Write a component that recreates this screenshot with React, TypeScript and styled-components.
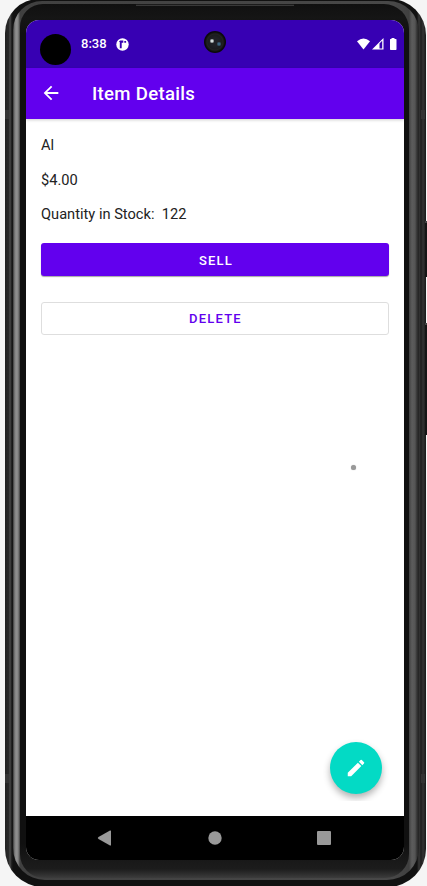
import React from "react";
import styled, { createGlobalStyle } from "styled-components";

const GlobalStyle = createGlobalStyle`
  * { box-sizing: border-box; }
  body { margin: 0; background: #f5f5f5; overflow: hidden; font-family: Roboto, sans-serif; }
  button { font-family: inherit; }
`;

const Stage = styled.main`
  position: relative;
  width: 427px;
  height: 886px;
  overflow: hidden;
  padding-left: 5px;
  background: #f5f5f5;
`;

const Shell = styled.div`
  width: 421px;
  height: 888px;
  margin-top: -1px;
  padding: 2px 7px 7px 8px;
  border-radius: 34px 36px 38px 38px;
  background: linear-gradient(90deg, #202020 0, #292929 4px, #505050 5px, #282828 6px, #111 8px, #111 412px, #383838 414px, #1c1c1c 416px, #333 418px, #181818 421px);
`;

const Rim = styled.div`
  height: 100%;
  padding: 3px 10px 2px 7px;
  border-radius: 29px 31px 32px 32px;
  background: linear-gradient(90deg, #333 0, #666 1px, #919191 3px, #858585 5px, #404040 7px, #484848 380px, #404040 396px, #5c5c5c 399px, #555 402px, #333 404px, #222 406px);
`;

const Bezel = styled.div`
  height: 100%;
  padding: 16px 5px 0 6px;
  border-radius: 23px 25px 24px 24px;
  background: linear-gradient(180deg, #101010 0, #151515 14px, #101010 30px, #101010 840px, #191919 858px, #1c1c1c 865px, #404040 875px);
`;

const Screen = styled.div`
  position: relative;
  display: flex;
  flex-direction: column;
  width: 378px;
  height: 840px;
  border-radius: 13px;
  overflow: hidden;
  background: #fff;
`;

const StatusBar = styled.div`
  display: flex;
  flex: 0 0 48px;
  align-items: center;
  padding: 0 6px 0 14px;
  color: #fff;
  background: #3700b3;
`;

const Cutout = styled.span`
  width: 31px;
  height: 31px;
  margin: 10px 10px 0 0;
  border-radius: 50%;
  background: #000;
`;

const Clock = styled.span`
  width: 35px;
  font-size: 13px;
  font-weight: 500;
  line-height: 16px;
`;

const StatusIcons = styled.div`
  display: flex;
  margin-left: auto;
`;

const Camera = styled.span`
  position: absolute;
  top: 11px;
  left: 178px;
  width: 22px;
  height: 22px;
  border-radius: 50%;
  background:
    radial-gradient(circle at 8px 10px, #d5dede 0 1px, transparent 2.5px),
    radial-gradient(circle at 15px 13px, #3c6681 0 1px, transparent 2.5px),
    radial-gradient(circle at 11px 11px, #202126 0 4px, #1b1c1f 7px, #222 8px, #0a0a0a 10px);
`;

const AppBar = styled.header`
  display: flex;
  flex: 0 0 51px;
  align-items: center;
  gap: 29px;
  padding-left: 14px;
  color: #fff;
  background: #6200ee;
  box-shadow: 0 1px 3px rgba(0, 0, 0, 0.2);
  z-index: 1;
`;

const IconButton = styled.button`
  display: flex;
  margin-bottom: 1px;
  padding: 0;
  border: 0;
  color: inherit;
  background: none;
`;

const Title = styled.h1`
  margin: 1px 0 0;
  padding-left: 1px;
  font-size: 18.6px;
  font-weight: 500;
  line-height: 24px;
  letter-spacing: 0.3px;
`;

const Content = styled.section`
  position: relative;
  display: flex;
  flex: 1;
  flex-direction: column;
  padding: 16px 15px 0;
`;

const Detail = styled.p`
  height: 20px;
  margin: 0 0 14.6px;
  color: #222;
  font-size: 14.65px;
  line-height: 21px;
  white-space: pre;
`;

const ActionButton = styled.button<{ $outlined?: boolean }>`
  height: 33px;
  margin: ${({ $outlined }) => ($outlined ? "26px 0 0" : "4px 0 0")};
  padding: ${({ $outlined }) => ($outlined ? "1px 0 0 1px" : "2px 0 0 2px")};
  border: ${({ $outlined }) => ($outlined ? "1px solid #dedede" : "0")};
  border-radius: 3px;
  color: ${({ $outlined }) => ($outlined ? "#6200ee" : "#fff")};
  background: ${({ $outlined }) => ($outlined ? "#fff" : "#6200ee")};
  box-shadow: ${({ $outlined }) => ($outlined ? "none" : "0 1px 1px rgba(0, 0, 0, .35)")};
  font-size: 13px;
  font-weight: 500;
  letter-spacing: 1.2px;
`;

const TouchDot = styled.span`
  position: absolute;
  top: 346px;
  left: 325px;
  width: 5px;
  height: 5px;
  border-radius: 50%;
  background: #999;
  box-shadow: 0 0 1px #aaa;
`;

const FabArea = styled.div`
  position: absolute;
  right: 8px;
  bottom: 15px;
  width: 80px;
  height: 72px;
  padding: 13px 0 0 14.4px;
  overflow: hidden;
`;

const Fab = styled.button`
  display: grid;
  place-items: center;
  width: 52px;
  height: 52px;
  padding: 0;
  border: 0;
  border-radius: 50%;
  color: #fff;
  background: #03dac5;
  box-shadow: 0 4px 7px rgba(0, 0, 0, 0.3);
`;

const Navigation = styled.nav`
  display: flex;
  flex: 0 0 44px;
  align-items: center;
  justify-content: space-between;
  padding: 0 73px 0 71px;
  color: #999;
  background: #000;
`;

const SideKey = styled.span<{ $top: number; $height: number }>`
  position: absolute;
  right: 0;
  top: ${({ $top }) => $top}px;
  width: 2px;
  height: ${({ $height }) => $height}px;
  background: #151515;
  border-top: 2px solid #444;
`;

const AntennaBand = styled.span<{ $top: number; $right?: boolean }>`
  position: absolute;
  top: ${({ $top }) => $top}px;
  left: ${({ $right }) => ($right ? 421 : 5)}px;
  width: 4px;
  height: 9px;
  background: #333;
`;

const SpeakerSeam = styled.span`
  position: absolute;
  top: 4px;
  left: 136px;
  width: 158px;
  height: 2px;
  border-bottom: 1px solid #383838;
  background: #1b1b1b;
`;

const BackArrow = () => (
  <svg width="22" height="22" viewBox="0 0 24 24" fill="currentColor">
    <path d="M20 11H7.83l5.59-5.59L12 4l-8 8 8 8 1.41-1.41L7.83 13H20z" />
  </svg>
);

const Pencil = () => (
  <svg width="22" height="22" viewBox="0 0 24 24" fill="currentColor">
    <path d="M3 17.25V21h3.75L17.81 9.94l-3.75-3.75zM20.71 7.04a1 1 0 0 0 0-1.41l-2.34-2.34a1 1 0 0 0-1.41 0l-1.83 1.83 3.75 3.75z" />
  </svg>
);

const NoticeIcon = () => (
  <svg width="13" height="13" viewBox="0 0 13 13">
    <circle cx="6.5" cy="6.5" r="6.2" fill="#fff" />
    <path d="M2.8 3.4 4.2 2.6h3.1v2.2H5.7v5.4H3.8V4zM8.3 3h1.8v1.8H8.3z" fill="#3700b3" />
  </svg>
);

const Indicators = () => (
  <svg width="41" height="13" viewBox="0 0 41 13">
    <path d="M0 3.2Q6.5-2 13 3.2L6.5 11.5z" fill="#fff" />
    <path d="M15 11.5 26.5 0v11.5zM22.5 5.5v5h2.7V2.8z" fill="#fff" fillRule="evenodd" />
    <path d="M34.5 0h3v1H39q.5 0 .5.7v9.6q0 .7-.7.7h-5.1q-.7 0-.7-.7V1.7q0-.7.5-.7h1z" fill="#fff" />
  </svg>
);

export default function App() {
  return (
    <>
      <GlobalStyle />
      <Stage>
        <Shell>
          <Rim>
            <Bezel>
              <Screen>
                <StatusBar>
                  <Cutout />
                  <Clock>8:38</Clock>
                  <NoticeIcon />
                  <StatusIcons><Indicators /></StatusIcons>
                  <Camera />
                </StatusBar>
                <AppBar>
                  <IconButton aria-label="Back"><BackArrow /></IconButton>
                  <Title>Item Details</Title>
                </AppBar>
                <Content>
                  <Detail>Al</Detail>
                  <Detail>$4.00</Detail>
                  <Detail>{"Quantity in Stock:  122"}</Detail>
                  <ActionButton>SELL</ActionButton>
                  <ActionButton $outlined>DELETE</ActionButton>
                  <TouchDot />
                  <FabArea><Fab aria-label="Edit item"><Pencil /></Fab></FabArea>
                </Content>
                <Navigation>
                  <svg width="15" height="16" viewBox="0 0 15 16"><path d="M1.5 7 13 .6q1-.5 1 .5v13.8q0 1-1 .5L1.5 9q-1.5-1 0-2z" fill="currentColor" /></svg>
                  <svg width="14" height="14" viewBox="0 0 14 14"><circle cx="7" cy="7" r="6.7" fill="currentColor" /></svg>
                  <svg width="14" height="14" viewBox="0 0 14 14"><rect width="14" height="14" rx="1" fill="currentColor" /></svg>
                </Navigation>
              </Screen>
            </Bezel>
          </Rim>
        </Shell>
        <SpeakerSeam />
        <AntennaBand $top={110} />
        <AntennaBand $top={774} />
        <AntennaBand $top={110} $right />
        <AntennaBand $top={774} $right />
        <SideKey $top={221} $height={56} />
        <SideKey $top={323} $height={112} />
      </Stage>
    </>
  );
}
